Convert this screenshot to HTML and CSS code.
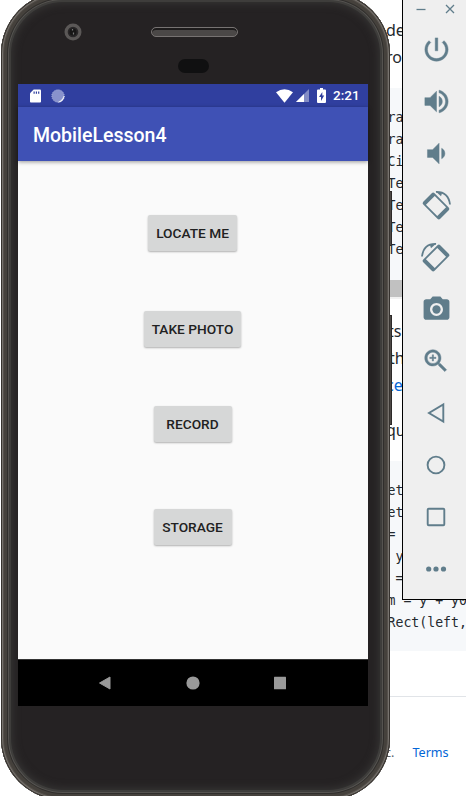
FILE: index.html
```html
<!DOCTYPE html>
<html lang="en">
<head>
<meta charset="utf-8">
<title>MobileLesson4</title>
<link rel="stylesheet" href="styles.css">
</head>
<body>
<main class="desktop">
  <div class="doc">
    <p class="prose first">de</p>
    <p class="prose">ro</p>
    <pre class="code upper">ra
ra
Ci
Te
Te
Te
Te</pre>
    <div class="scrollbar"></div>
    <p class="prose third">ts</p>
    <p class="prose fourth">th</p>
    <p class="prose"><a>ce</a></p>
    <p class="prose last">qu</p>
    <pre class="code lower">et
et
=
 y
 =
m = y + y0
Rect(left,</pre>
    <footer class="footer"><span>c.</span><a>Terms</a></footer>
  </div>

  <div class="key power-key"></div>
  <div class="key volume-key"></div>
  <section class="phone">
    <div class="bezel">
      <svg class="lens" viewBox="0 0 18 18"><circle cx="9" cy="9" r="8.5" fill="#5b5857"/><circle cx="9" cy="9" r="5.3" fill="#292728"/><circle cx="9" cy="9" r="3.5" fill="#171616"/><path d="M8.5 6v1.500M9.500 9.500v2" stroke="#777" stroke-width="1.200"/></svg>
      <div class="speaker"></div>
      <div class="sensor"></div>
    </div>
    <div class="screen">
      <div class="status">
        <svg class="sd" viewBox="0 0 12 14"><path d="M4 0h7q1 0 1 1v12q0 1-1 1H1q-1 0-1-1V4z" fill="#fff"/><path d="M4.5 2v2.5M7 2v2.5M9.5 2v2.5" stroke="#303f9f" stroke-width="1.3"/></svg>
        <svg class="spin" viewBox="0 0 14 14"><circle cx="7" cy="7" r="6.2" fill="#8993cc"/><circle cx="7" cy="7" r="6.2" fill="none" stroke="#a9b1dc" stroke-dasharray="1 1"/><path d="M13.200 7A6.300 6.300 0 0 1 7.500 13.200Q11.500 11.500 13.200 7z" fill="#fff" stroke="#fff" stroke-width=".5"/></svg>
        <svg class="wifi" viewBox="0 0 17 14"><path d="M0 3.2Q8.5-2.8 17 3.2L8.5 13.7z" fill="#fff"/></svg>
        <svg class="signal" viewBox="0 0 13 13"><path d="M13 0v13H0z" fill="#838cc5"/><path d="M8 5v8H0z" fill="#fff"/></svg>
        <svg class="battery" viewBox="0 0 9 15"><path d="M3 0h3v1.5h2q1 0 1 1V14q0 1-1 1H1q-1 0-1-1V2.500q0-1 1-1h2z" fill="#fff"/><path d="M5.300 4 2 9h2v4l3.200-5.500h-1.900z" fill="#303f9f"/></svg>
        <span class="clock">2:21</span>
      </div>
      <header class="appbar">MobileLesson4</header>
      <div class="content">
        <button class="btn locate">LOCATE ME</button>
        <button class="btn photo">TAKE PHOTO</button>
        <button class="btn record">RECORD</button>
        <button class="btn storage">STORAGE</button>
      </div>
      <nav class="nav">
        <svg viewBox="0 0 14 14"><path d="M12 1v12L1.500 7z" fill="#999" stroke="#999" stroke-linejoin="round"/></svg>
        <svg viewBox="0 0 14 14"><circle cx="7" cy="7" r="6.600" fill="#999"/></svg>
        <svg viewBox="0 0 14 14"><rect x="1" y=".8" width="12" height="12.400" rx=".5" fill="#999"/></svg>
      </nav>
    </div>
  </section>

  <aside class="toolbar">
    <div class="window-controls">
      <svg viewBox="0 0 10 10"><path d="M.5 5.500h9" /></svg>
      <svg viewBox="0 0 10 10"><path d="M1 1l8 8M9 1 1 9"/></svg>
    </div>
    <div class="tool"><svg viewBox="0 0 24 24" class="bold"><path d="M13 3h-2v10h2V3zm4.830 2.170-1.420 1.420C17.990 7.860 19 9.810 19 12c0 3.870-3.130 7-7 7s-7-3.130-7-7c0-2.190 1.010-4.140 2.580-5.420L6.170 5.170C4.230 6.820 3 9.260 3 12c0 4.970 4.030 9 9 9s9-4.030 9-9c0-2.740-1.230-5.180-3.170-6.830z"/></svg></div>
    <div class="tool"><svg viewBox="0 0 24 24" class="bold"><path d="M3 9v6h4l5 5V4L7 9H3zm13.500 3c0-1.770-1.020-3.290-2.500-4.030v8.050c1.480-.730 2.500-2.250 2.500-4.020zM14 3.230v2.060c2.890.860 5 3.540 5 6.710s-2.110 5.850-5 6.710v2.060c4.010-.910 7-4.490 7-8.770s-2.990-7.860-7-8.770z"/></svg></div>
    <div class="tool"><svg viewBox="0 0 24 24" class="bold"><path d="M18.500 12c0-1.770-1.020-3.290-2.500-4.030v8.050c1.480-.730 2.500-2.250 2.500-4.020zM5 9v6h4l5 5V4L9 9H5z"/></svg></div>
    <div class="tool"><svg class="wide" viewBox="0 0 32 32"><path transform="rotate(45 16 17)" fill-rule="evenodd" d="M6 9h20q2 0 2 2v12q0 2-2 2H6q-2 0-2-2V11q0-2 2-2zM8 10.800v12.400h16V10.800z"/><path d="M15.500 2.300l5.500 5 1-3z"/><path d="M16 2.800Q28.500 2.500 30 15.500" fill="none" stroke="#607d8b" stroke-width="1.800"/></svg></div>
    <div class="tool"><svg class="wide flip" viewBox="0 0 32 32"><path transform="rotate(45 16 17)" fill-rule="evenodd" d="M6 9h20q2 0 2 2v12q0 2-2 2H6q-2 0-2-2V11q0-2 2-2zM8 10.800v12.400h16V10.800z"/><path d="M15.500 2.300l5.500 5 1-3z"/><path d="M16 2.800Q28.500 2.500 30 15.500" fill="none" stroke="#607d8b" stroke-width="1.800"/></svg></div>
    <div class="tool"><svg viewBox="0 0 24 24"><circle cx="12" cy="12" r="3.200"/><path d="M9 2 7.170 4H4c-1.100 0-2 .9-2 2v12c0 1.100.9 2 2 2h16c1.100 0 2-.9 2-2V6c0-1.100-.9-2-2-2h-3.170L15 2H9zm3 15c-2.760 0-5-2.240-5-5s2.240-5 5-5 5 2.240 5 5-2.240 5-5 5z"/></svg></div>
    <div class="tool"><svg class="zoom bold" viewBox="0 0 24 24"><path d="M15.500 14h-.790l-.280-.270C15.410 12.590 16 11.110 16 9.500 16 5.910 13.090 3 9.500 3S3 5.910 3 9.500 5.910 16 9.500 16c1.610 0 3.090-.590 4.230-1.570l.270.280v.790l5 4.990L20.490 19l-4.990-5zm-6 0C7.010 14 5 11.990 5 9.500S7.010 5 9.500 5 14 7.010 14 9.500 11.990 14 9.500 14zM12 10h-2v2H9v-2H7V9h2V7h1v2h2v1z"/></svg></div>
    <div class="tool line"><svg class="wide" viewBox="0 0 32 32"><path d="M23.300 7.500v17L9 16z"/></svg></div>
    <div class="tool line"><svg class="wide" viewBox="0 0 32 32"><circle cx="16" cy="16" r="8.400"/></svg></div>
    <div class="tool line"><svg class="wide" viewBox="0 0 32 32"><rect x="7.700" y="7.700" width="16.600" height="16.600" rx="1"/></svg></div>
    <div class="tool"><svg class="wide" viewBox="0 0 32 32"><circle cx="8.700" cy="16" r="2.600"/><circle cx="16" cy="16" r="2.600"/><circle cx="23.500" cy="16" r="2.600"/></svg></div>
  </aside>
</main>
</body>
</html>
```

FILE: styles.css
```css
* { box-sizing: border-box; }
body { margin: 0; background: #fff; }
svg { display: block; flex: none; }

.desktop {
  position: relative;
  width: 466px;
  height: 796px;
  overflow: hidden;
  background: #fff;
}

/* Web page behind the emulator */
.doc {
  height: 796px;
  margin-left: 100px;
  padding-top: 17px;
  font-family: "Noto Sans", sans-serif;
  color: #24292e;
}
.prose {
  margin: 0;
  padding-left: 286px;
  font-size: 16px;
  line-height: 27px;
}
.prose.third { margin-top: 19px; padding-left: 288px; }
.prose.fourth { padding-left: 289px; }
.prose.last { margin-top: 18px; }
.doc a { color: #0366d6; }
.code {
  margin: 0;
  padding-left: 287.500px;
  background: #f6f8fa;
  font: 13.200px/22px "DejaVu Sans Mono", monospace;
  overflow: hidden;
}
.code.upper { margin-top: 17px; padding-top: 19px; height: 192px; }
.code.lower { margin-top: 17px; padding-top: 19px; height: 190px; }
.scrollbar { height: 19px; background: #c1c1c1; border-bottom: 2px solid #f1f1f1; }
.footer {
  display: flex;
  gap: 18px;
  margin-top: 45px;
  padding: 47px 0 0 285px;
  border-top: 1px solid #e1e4e8;
  font-size: 12.600px;
  line-height: 18px;
}
.footer span { color: #586069; }

/* Phone */
.key {
  position: absolute;
  left: 386px;
  width: 6px;
  background: #4d4946;
  border: 1px solid #2d2a29;
}
.power-key { top: 191px; height: 55px; }
.volume-key { top: 315px; height: 110px; }
.phone {
  position: absolute;
  left: 1px;
  top: -8px;
  width: 389px;
  height: 808px;
  padding: 0 22px 0 17px;
  border-radius: 62px;
  background: #252223;
  box-shadow:
    inset 0 0 0 1px #37332f,
    inset 0 0 0 2px #77736e,
    inset 0 0 0 3px #55504b,
    inset 0 0 0 6px #45413c,
    inset 0 0 0 7px #302e2c,
    inset 0 0 0 8px #555350,
    inset 0 0 0 10px #3e3d3b,
    inset 0 0 8px 11px #383736;
}
.bezel {
  display: grid;
  grid-template-columns: 133px 87px 1fr;
  grid-template-rows: 18px auto;
  row-gap: 13px;
  height: 92px;
  padding-top: 31px;
}
.lens { width: 18px; height: 18px; margin-left: 46px; }
.speaker {
  height: 10px;
  margin-top: 4px;
  border: 1px solid #777372;
  border-radius: 5px;
  background: #4b4847;
  box-shadow: inset 0 2px 0 #1d1b1b;
}
.sensor {
  grid-column: 2;
  width: 31px;
  height: 14px;
  margin: 5px 0 0 27px;
  border-radius: 7px;
  background: #101011;
}
.screen {
  width: 350px;
  height: 622px;
  display: flex;
  flex-direction: column;
  background: #fafafa;
  font-family: Roboto, sans-serif;
}
.status {
  display: flex;
  align-items: center;
  height: 23px;
  padding: 0 9px 0 12px;
  background: #303f9f;
  color: #fff;
}
.sd { width: 11px; height: 14px; }
.spin { width: 14px; height: 14px; margin-left: 10px; }
.wifi { width: 17px; height: 14px; margin-left: auto; }
.signal { width: 13px; height: 13px; margin-left: 3px; }
.battery { width: 9px; height: 15px; margin-left: 8px; }
.clock { width: 26px; margin-left: 7px; font-size: 13.500px; font-weight: 500; line-height: 23px; }
.appbar {
  position: relative;
  height: 54px;
  padding: 3px 0 0 15px;
  background: #3f51b5;
  box-shadow: 0 1px 4px rgba(0, 0, 0, .4);
  color: #fff;
  font-size: 19.500px;
  font-weight: 500;
  line-height: 51px;
}
.content {
  display: flex;
  flex-direction: column;
  align-items: center;
  height: 498px;
  padding: 54px 1px 0 0;
}
.btn {
  height: 36px;
  padding: 1px 0 0;
  border: 0;
  border-radius: 2px;
  background: #d6d7d7;
  box-shadow: 0 1px 2px rgba(0, 0, 0, .3);
  color: #212121;
  font: 500 13.700px/35px Roboto, sans-serif;
  white-space: nowrap;
}
.locate { width: 89px; }
.photo { width: 97px; margin-top: 60px; }
.record { width: 78px; margin-top: 59px; }
.storage { width: 78px; margin-top: 67px; }
.nav {
  display: flex;
  justify-content: center;
  align-items: center;
  gap: 73.500px;
  height: 47px;
  padding: 0 1px 1px 0;
  border-top: 1px solid #333;
  background: #000;
}
.nav svg { width: 14px; height: 14px; }

/* Emulator controls */
.toolbar {
  position: absolute;
  left: 402px;
  top: 0;
  width: 70px;
  height: 600px;
  border-left: 1px solid #000;
  border-bottom: 1px solid #000;
  background: #efefef;
}
.window-controls {
  display: flex;
  gap: 19px;
  height: 23px;
  padding: 4px 0 0 13px;
}
.window-controls svg {
  width: 10px;
  height: 10px;
  fill: none;
  stroke: #607d8b;
  stroke-width: 1.300;
}
.tool {
  display: flex;
  align-items: center;
  justify-content: center;
  width: 66px;
  height: 52px;
  fill: #607d8b;
}
.tool svg { width: 31px; height: 31px; }
.tool svg.bold { stroke: #607d8b; stroke-width: .350; }
.tool svg.wide { width: 32px; height: 32px; }
.tool svg.zoom { width: 30px; height: 30px; }
.tool svg.flip { transform: scaleX(-1); }
.tool.line { fill: none; stroke: #607d8b; stroke-width: 1.900; }
```
